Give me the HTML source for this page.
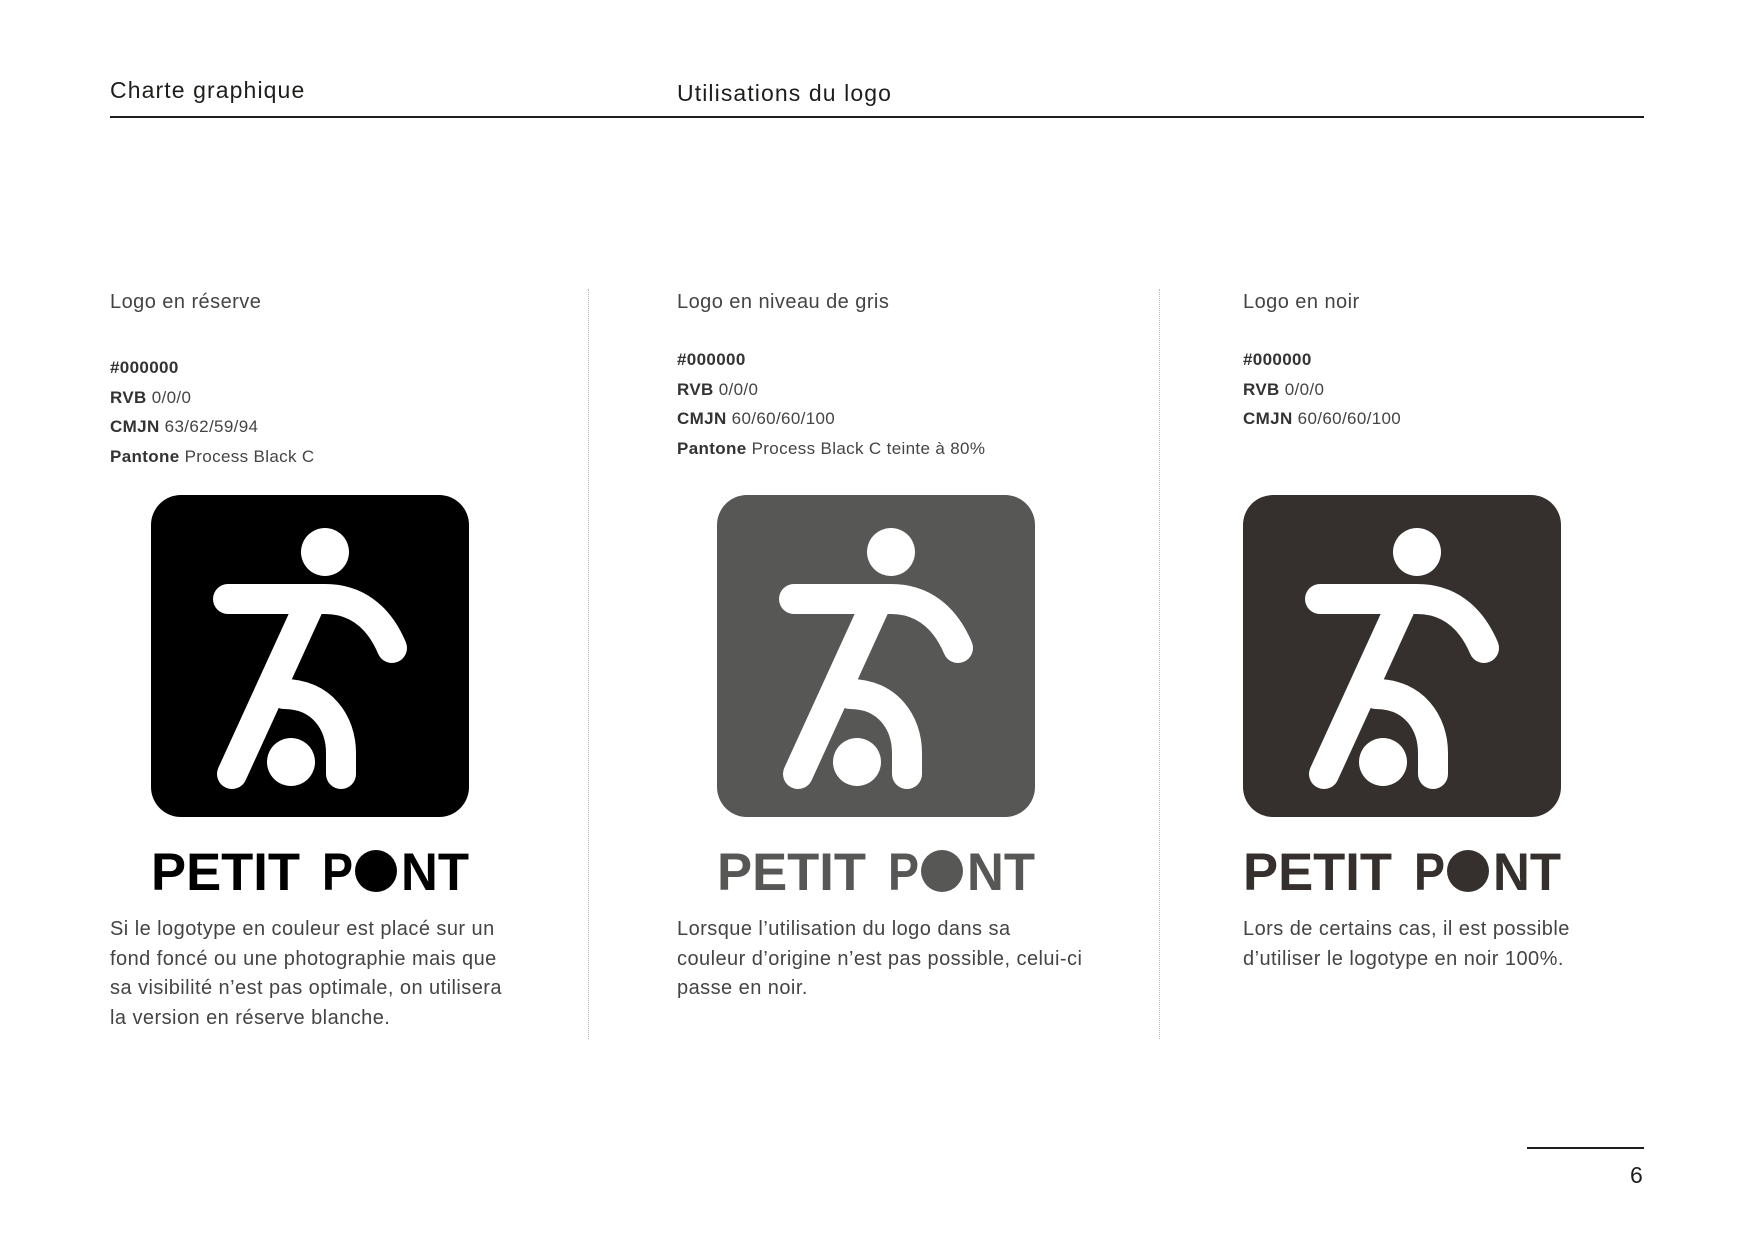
<!DOCTYPE html>
<html><head><meta charset="utf-8"><style>
body{margin:0;width:1754px;height:1240px;background:#fff;position:relative;overflow:hidden;font-family:"Liberation Sans",sans-serif;color:#3c3c3b}
.a{position:absolute;white-space:nowrap}
.h{font-size:23px;color:#1d1d1b;line-height:30px;letter-spacing:1.1px}
.t{font-size:20px;line-height:29.5px;color:#444;letter-spacing:0.45px}
.s{font-size:17px;line-height:29.5px;color:#444;letter-spacing:0.35px}
.s b{color:#333;font-weight:bold}
.dot{position:absolute;top:289px;height:750px;border-left:1.5px dotted #bbb}
</style></head><body>
<div class="a h" style="left:110px;top:75px">Charte graphique</div>
<div class="a h" style="left:677px;top:78px">Utilisations du logo</div>
<div class="a" style="left:110px;top:116px;width:1534px;height:2px;background:#1d1d1b"></div>
<div class="dot" style="left:588px"></div>
<div class="dot" style="left:1159px"></div>

<div class="a t" style="left:110px;top:288px">Logo en réserve</div>
<div class="a s" style="left:110px;top:353px"><b>#000000</b><br><b>RVB</b> 0/0/0<br><b>CMJN</b> 63/62/59/94<br><b>Pantone</b> Process Black C</div>
<div class="a t" style="left:677px;top:288px">Logo en niveau de gris</div>
<div class="a s" style="left:677px;top:345px"><b>#000000</b><br><b>RVB</b> 0/0/0<br><b>CMJN</b> 60/60/60/100<br><b>Pantone</b> Process Black C teinte à 80%</div>
<div class="a t" style="left:1243px;top:288px">Logo en noir</div>
<div class="a s" style="left:1243px;top:345px"><b>#000000</b><br><b>RVB</b> 0/0/0<br><b>CMJN</b> 60/60/60/100</div>

<svg class="a" style="left:0;top:0" width="1754" height="1240">
<defs>
<g id="fig" fill="none" stroke="#fff" stroke-width="30" stroke-linecap="round">
<circle cx="175" cy="57" r="24" fill="#fff" stroke="none"/>
<circle cx="141" cy="267" r="24" fill="#fff" stroke="none"/>
<path d="M78,104 H175 C205,104 228,120 242,153"/>
<path d="M162,104 L82,279"/>
<path d="M134,199 C172,199 191,228 191,258 V279"/>
</g>
<g id="wm">
<text x="151" y="890" font-size="53" font-weight="bold" textLength="149" lengthAdjust="spacingAndGlyphs">PETIT</text>
<text x="322" y="890" font-size="53" font-weight="bold" textLength="31" lengthAdjust="spacingAndGlyphs">P</text>
<circle cx="376" cy="871" r="21"/>
<text x="401" y="890" font-size="53" font-weight="bold" textLength="68" lengthAdjust="spacingAndGlyphs">NT</text>
</g>
</defs>
<g>
<rect x="151" y="495" width="318" height="322" rx="30" fill="#000"/>
<g transform="translate(150,495)"><use href="#fig"/></g>
<g fill="#000"><use href="#wm"/></g>
</g>
<g transform="translate(566,0)">
<rect x="151" y="495" width="318" height="322" rx="30" fill="#575756"/>
<g transform="translate(150,495)"><use href="#fig"/></g>
<g fill="#575756"><use href="#wm"/></g>
</g>
<g transform="translate(1092,0)">
<rect x="151" y="495" width="318" height="322" rx="30" fill="#35302d"/>
<g transform="translate(150,495)"><use href="#fig"/></g>
<g fill="#35302d"><use href="#wm"/></g>
</g>
</svg>

<div class="a t" style="left:110px;top:915px">Si le logotype en couleur est placé sur un<br>fond foncé ou une photographie mais que<br>sa visibilité n’est pas optimale, on utilisera<br>la version en réserve blanche.</div>
<div class="a t" style="left:677px;top:915px">Lorsque l’utilisation du logo dans sa<br>couleur d’origine n’est pas possible, celui-ci<br>passe en noir.</div>
<div class="a t" style="left:1243px;top:915px">Lors de certains cas, il est possible<br>d’utiliser le logotype en noir 100%.</div>

<div class="a" style="left:1527px;top:1147px;width:117px;height:1.5px;background:#1d1d1b"></div>
<div class="a h" style="left:1630px;top:1160px">6</div>
</body></html>
